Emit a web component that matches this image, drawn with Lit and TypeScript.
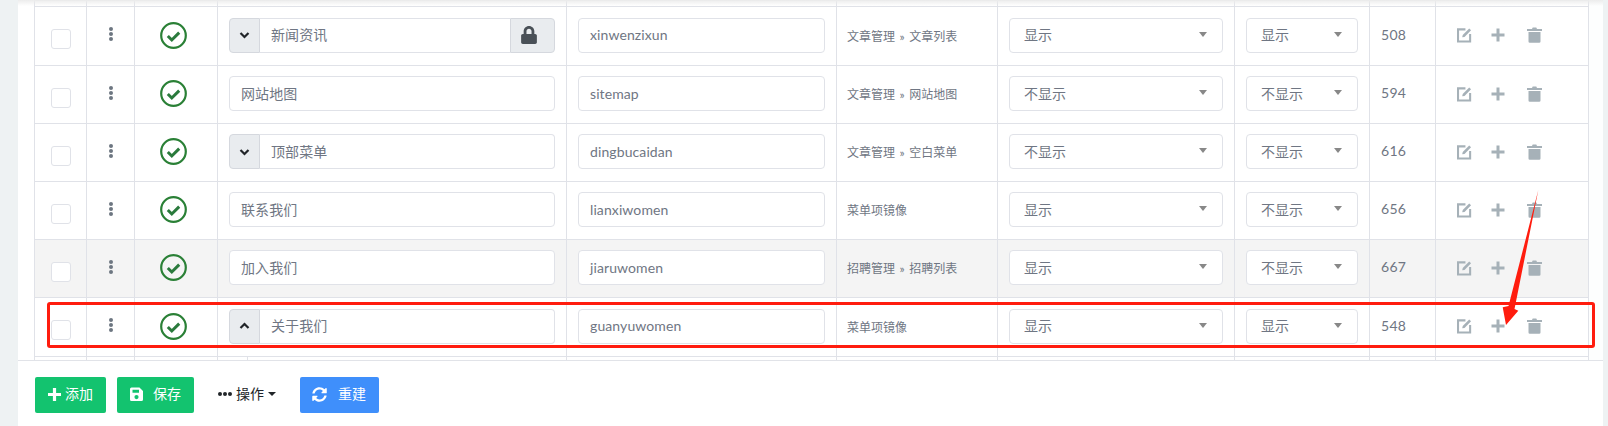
import { LitElement, html, css, svg } from "lit";
import { customElement } from "lit/decorators.js";

interface Row {
  title: string;
  slug: string;
  path: string;
  nav: string;
  foot: string;
  id: string;
  toggle?: "down" | "up";
  lock?: boolean;
  hover?: boolean;
  height: number;
}

const rows: Row[] = [
  { title: "新闻资讯", slug: "xinwenzixun", path: "文章管理 » 文章列表", nav: "显示", foot: "显示", id: "508", toggle: "down", lock: true, height: 59 },
  { title: "网站地图", slug: "sitemap", path: "文章管理 » 网站地图", nav: "不显示", foot: "不显示", id: "594", height: 58 },
  { title: "顶部菜单", slug: "dingbucaidan", path: "文章管理 » 空白菜单", nav: "不显示", foot: "不显示", id: "616", toggle: "down", height: 58 },
  { title: "联系我们", slug: "lianxiwomen", path: "菜单项镜像", nav: "显示", foot: "不显示", id: "656", height: 58 },
  { title: "加入我们", slug: "jiaruwomen", path: "招聘管理 » 招聘列表", nav: "显示", foot: "不显示", id: "667", hover: true, height: 58 },
  { title: "关于我们", slug: "guanyuwomen", path: "菜单项镜像", nav: "显示", foot: "显示", id: "548", toggle: "up", height: 59 },
];

const check = svg`<svg width="27" height="27" viewBox="0 0 27 27"><circle cx="13.500" cy="13.500" r="12.300" fill="none" stroke="#2a8036" stroke-width="2.200"/><path d="M7.800 14l4 4 7.400-7.400" fill="none" stroke="#2a7a3c" stroke-width="3"/></svg>`;
const lock = svg`<svg width="16" height="18" viewBox="0 0 448 512"><path fill="#495057" d="M400 224h-24v-72C376 68.200 307.800 0 224 0S72 68.200 72 152v72H48c-26.500 0-48 21.500-48 48v192c0 26.500 21.500 48 48 48h352c26.500 0 48-21.500 48-48V272c0-26.500-21.500-48-48-48zm-104 0H152v-72c0-39.700 32.300-72 72-72s72 32.300 72 72v72z"/></svg>`;
const edit = svg`<svg width="16" height="16" viewBox="0 0 16 16"><path d="M9 2H1.100v12.900H14V7" fill="none" stroke="#a6b1b8" stroke-width="2.200"/><path d="M5.500 10.500l.6-2.500L13 1l2 2-7 7z" fill="#a6b1b8"/></svg>`;
const plus = svg`<svg width="14" height="14" viewBox="0 0 14 14"><path d="M0.500 7h13M7 .5v13" stroke="#a6b1b8" stroke-width="3" fill="none"/></svg>`;
const trash = svg`<svg width="15" height="16" viewBox="0 0 15 16"><path fill="#a6b1b8" d="M0 2h5l.7-1.500h3.600L10 2h5v2H0zM1.500 5h12v9.500a1.300 1.300 0 0 1-1.300 1.300H2.800a1.300 1.300 0 0 1-1.300-1.300z"/></svg>`;
const btnPlus = svg`<svg width="13" height="13" viewBox="0 0 13 13"><path d="M0 6.500h13M6.500 0v13" stroke="#fff" stroke-width="3.200" fill="none"/></svg>`;
const btnSave = svg`<svg width="13" height="14" viewBox="0 0 13 14"><path fill="#fff" fill-rule="evenodd" d="M1.500 0.500h8l3.500 3.500v8.500a1.500 1.500 0 0 1-1.500 1.500h-10A1.500 1.500 0 0 1 0 12.500V2a1.500 1.500 0 0 1 1.500-1.500zM2.500 2.800v3h6.500v-3zM6.500 8a2.100 2.100 0 1 0 0 4.200 2.100 2.100 0 0 0 0-4.200z"/></svg>`;
const btnSync = svg`<svg width="15" height="15" viewBox="0 0 512 512"><path fill="#fff" d="M370.720 133.280C339.458 104.008 298.888 87.962 255.848 88c-77.458.068-144.328 53.178-162.791 126.850-1.344 5.363-6.122 9.150-11.651 9.150H24.103c-7.498 0-13.194-6.807-11.807-14.176C33.933 94.924 134.813 8 256 8c66.448 0 126.791 26.136 171.315 68.685L463.030 40.970C478.149 25.851 504 36.559 504 57.941V192c0 13.255-10.745 24-24 24H345.941c-21.382 0-32.090-25.851-16.971-40.971l41.750-41.749zM32 296h134.059c21.382 0 32.090 25.851 16.971 40.971l-41.750 41.750c31.262 29.273 71.835 45.319 114.876 45.280 77.418-.070 144.315-53.144 162.787-126.849 1.344-5.363 6.122-9.150 11.651-9.150h57.304c7.498 0 13.194 6.807 11.807 14.176C478.067 417.076 377.187 504 256 504c-66.448 0-126.791-26.136-171.315-68.685L48.970 471.030C33.851 486.149 8 475.441 8 454.059V320c0-13.255 10.745-24 24-24z"/></svg>`;

@customElement("app-root")
export class AppRoot extends LitElement {
  static styles = css`
    :host {
      display: flex;
      position: relative;
      width: 1608px;
      height: 426px;
      overflow: hidden;
      background: #eef2f3;
      font-family: "Lato", "Noto Sans CJK SC", sans-serif;
      font-size: 14px;
      color: #6f7683;
    }
    .side { width: 18px; flex: none; background: #eef2f3; }
    .card { width: 1585px; flex: none; display: flex; flex-direction: column; background: #fff; }
    .body {
      height: 361px;
      flex: none;
      box-sizing: border-box;
      display: flex;
      padding-left: 16px;
      border-bottom: 1px solid #e1e3e8;
      overflow: hidden;
      position: relative;
    }
    .body::before {
      content: "";
      position: absolute;
      left: 0;
      right: 0;
      top: 0;
      height: 6px;
      background: linear-gradient(#ececec, rgba(255, 255, 255, 0));
    }
    .gutter { flex: 1; background: #fdfefe; }
    table { border-collapse: collapse; table-layout: fixed; width: 1554px; flex: none; }
    td {
      border: 1px solid #e0e2e8;
      padding: 0 0 2px;
      vertical-align: middle;
      box-sizing: border-box;
    }
    tr.hover td { background: #f4f4f4; }
    tr.cap td, tr.tail td { height: 6px; padding: 0; }
    .split { display: flex; height: 6px; }
    .split i { width: 29px; border-right: 1px solid #e0e2e8; }
    .center { display: flex; justify-content: center; align-items: center; }
    .box {
      width: 20px;
      height: 20px;
      box-sizing: border-box;
      border: 1px solid #e0e2e8;
      border-radius: 3px;
      background: #fff;
      margin-top: 8px;
    }
    .dots { display: flex; flex-direction: column; gap: 1px; margin-top: -2px; }
    .dots b { width: 4px; height: 4px; border-radius: 50%; background: #6d7681; }
    .check { display: flex; margin: 0 5px 0 0; }
    .field { display: flex; height: 35px; margin: 0 11px; }
    .addon {
      flex: none;
      box-sizing: border-box;
      background: #e9ecef;
      border: 1px solid #d5d8de;
      display: flex;
      align-items: center;
      justify-content: center;
    }
    .addon.toggle { width: 31px; border-radius: 4px 0 0 4px; }
    .addon.lock { width: 45px; border-radius: 0 4px 4px 0; padding-right: 8px; }
    .input {
      flex: 1;
      min-width: 0;
      box-sizing: border-box;
      background: #fff;
      border: 1px solid #e0e2e8;
      border-radius: 4px;
      padding: 0 11px;
      display: flex;
      align-items: center;
      letter-spacing: .1px;
      font-size: 14px;
      line-height: 1;
    }
    .addon.toggle + .input { border-left: none; border-radius: 0 4px 4px 0; }
    .input.grouped { border-radius: 0; border-right: none; }
    .addon.toggle + .input.grouped { border-radius: 0; }
    .path { font-size: 12px; padding-left: 10px; white-space: nowrap; word-spacing: 1.500px; }
    .select {
      height: 35px;
      box-sizing: border-box;
      margin: 0 11px;
      background: #fff;
      border: 1px solid #e0e2e8;
      border-radius: 4px;
      padding: 0 15px 2px 14px;
      display: flex;
      align-items: center;
      justify-content: space-between;
    }
    .tri { width: 0; height: 0; border-left: 4px solid transparent; border-right: 4px solid transparent; border-top: 5px solid #888; }
    .num { padding: 0 0 2px 11px; font-size: 14px; letter-spacing: .3px; }
    .acts { display: flex; align-items: center; padding-left: 21px; gap: 20px; }
    .acts span { display: flex; width: 15px; justify-content: center; }
    .acts span.mid { margin: 0 2px 0 -2px; }
    .foot { display: flex; align-items: center; padding: 16px 0 0 17px; }
    .btn {
      height: 36px;
      box-sizing: border-box;
      border-radius: 2px;
      color: #fff;
      display: flex;
      align-items: center;
      font-size: 14px;
      line-height: 1;
      padding-bottom: 2px;
    }
    .btn.add { width: 71px; background: #13c36f; padding-left: 13px; gap: 4px; }
    .btn.save { width: 77px; background: #13c36f; margin-left: 11px; padding-left: 13px; gap: 10px; }
    .btn.more { width: 82px; color: #212529; margin-left: 24px; gap: 4px; }
    .btn.re { width: 79px; background: #3f8ffb; padding-left: 12px; gap: 11px; }
    .ell { display: flex; gap: 1px; }
    .ell b { width: 4px; height: 4px; border-radius: 50%; background: #212529; }
    .car { width: 0; height: 0; border-left: 4px solid transparent; border-right: 4px solid transparent; border-top: 4.500px solid #212529; }
    .mark { position: absolute; inset: 0; pointer-events: none; }
    .rect {
      position: absolute;
      left: 47px;
      top: 302px;
      width: 1548px;
      height: 46px;
      box-sizing: border-box;
      border: 3px solid #ff1c0e;
      border-radius: 3px;
    }
    .mark svg { position: absolute; left: 0; top: 0; }
  `;

  private chevron(dir: "down" | "up") {
    const d = dir === "down" ? "M1.500 2l4 4 4-4" : "M1.500 6l4-4 4 4";
    return svg`<svg width="11" height="8" viewBox="0 0 11 8"><path d="${d}" fill="none" stroke="#212529" stroke-width="2.200"/></svg>`;
  }

  private blank(kind: string) {
    const cols = [0, 1, 2, 3, 4, 5, 6, 7, 8, 9];
    return html`<tr class=${kind}>${cols.map((c) =>
      html`<td>${kind === "tail" && c === 3 ? html`<div class="split"><i></i></div>` : ""}</td>`
    )}</tr>`;
  }

  private row(r: Row) {
    return html`<tr class=${r.hover ? "hover" : ""} style="height:${r.height}px">
      <td><div class="center"><div class="box"></div></div></td>
      <td><div class="center"><div class="dots"><b></b><b></b><b></b></div></div></td>
      <td><div class="center"><span class="check">${check}</span></div></td>
      <td>
        <div class="field">
          ${r.toggle ? html`<div class="addon toggle">${this.chevron(r.toggle)}</div>` : ""}
          <div class="input ${r.lock ? "grouped" : ""}">${r.title}</div>
          ${r.lock ? html`<div class="addon lock">${lock}</div>` : ""}
        </div>
      </td>
      <td><div class="field"><div class="input">${r.slug}</div></div></td>
      <td><div class="path">${r.path}</div></td>
      <td><div class="select"><span>${r.nav}</span><i class="tri"></i></div></td>
      <td><div class="select"><span>${r.foot}</span><i class="tri"></i></div></td>
      <td><div class="num">${r.id}</div></td>
      <td><div class="acts"><span>${edit}</span><span class="mid">${plus}</span><span>${trash}</span></div></td>
    </tr>`;
  }

  render() {
    const widths = [52, 48, 83, 349, 270, 161, 237, 135, 66, 153];
    return html`
      <div class="side"></div>
      <div class="card">
        <div class="body">
          <table>
            <colgroup>${widths.map((w) => html`<col style="width:${w}px" />`)}</colgroup>
            <tbody>
              ${this.blank("cap")}
              ${rows.map((r) => this.row(r))}
              ${this.blank("tail")}
            </tbody>
          </table>
          <div class="gutter"></div>
        </div>
        <div class="foot">
          <div class="btn add">${btnPlus}<span>添加</span></div>
          <div class="btn save">${btnSave}<span>保存</span></div>
          <div class="btn more"><span class="ell"><b></b><b></b><b></b></span><span>操作</span><i class="car"></i></div>
          <div class="btn re">${btnSync}<span>重建</span></div>
        </div>
      </div>
      <div class="mark">
        <div class="rect"></div>
        <svg width="1608" height="426" viewBox="0 0 1608 426">
          <polygon fill="#ff1c0e" points="1538.300,190 1514.500,309 1518.300,310.700 1506,325 1502.700,307.300 1508.500,306" />
        </svg>
      </div>
    `;
  }
}
